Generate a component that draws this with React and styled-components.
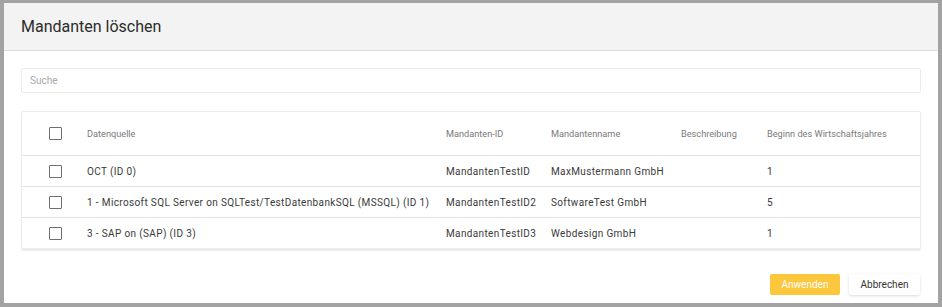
import React from "react";
import styled, { createGlobalStyle } from "styled-components";

const GlobalStyle = createGlobalStyle`
  html, body {
    margin: 0;
    padding: 0;
    background: #a3a3a3;
    font-family: Roboto, "Liberation Sans", sans-serif;
  }
`;

const columns = [
  { key: "source", label: "Datenquelle" },
  { key: "id", label: "Mandanten-ID" },
  { key: "name", label: "Mandantenname" },
  { key: "desc", label: "Beschreibung" },
  { key: "start", label: "Beginn des Wirtschaftsjahres" },
];

const rows = [
  {
    source: "OCT (ID 0)",
    id: "MandantenTestID",
    name: "MaxMustermann GmbH",
    desc: "",
    start: "1",
  },
  {
    source: "1 - Microsoft SQL Server on SQLTest/TestDatenbankSQL (MSSQL) (ID 1)",
    id: "MandantenTestID2",
    name: "SoftwareTest GmbH",
    desc: "",
    start: "5",
  },
  {
    source: "3 - SAP on (SAP) (ID 3)",
    id: "MandantenTestID3",
    name: "Webdesign GmbH",
    desc: "",
    start: "1",
  },
];

const App = () => {
  return (
    <>
      <GlobalStyle />
      <Frame>
        <Dialog>
          <Header>
            <Title>Mandanten löschen</Title>
          </Header>
          <Body>
            <SearchInput placeholder="Suche" />
            <TableCard>
              <Row $head>
                <CheckCell>
                  <Checkbox />
                </CheckCell>
                {columns.map((c) => (
                  <Cell key={c.key} $head>
                    {c.label}
                  </Cell>
                ))}
              </Row>
              {rows.map((r, i) => (
                <Row key={i} $last={i === rows.length - 1}>
                  <CheckCell>
                    <Checkbox />
                  </CheckCell>
                  {columns.map((c) => (
                    <Cell key={c.key}>{r[c.key]}</Cell>
                  ))}
                </Row>
              ))}
            </TableCard>
          </Body>
          <Footer>
            <Button $primary>Anwenden</Button>
            <Button>Abbrechen</Button>
          </Footer>
        </Dialog>
      </Frame>
    </>
  );
};

export default App;

const Frame = styled.div`
  height: 307px;
  box-sizing: border-box;
  padding: 3px 4px 4px 4px;
  background: #a3a3a3;
`;

const Dialog = styled.div`
  height: 100%;
  background: #fff;
  display: flex;
  flex-direction: column;
`;

const Header = styled.div`
  height: 47px;
  background: #f3f3f3;
  border-bottom: 1px solid #dcdcdc;
  display: flex;
  align-items: center;
  padding: 0 17px;
`;

const Title = styled.h2`
  margin: 0;
  font-size: 16px;
  font-weight: 400;
  color: #2b2b2b;
`;

const Body = styled.div`
  padding: 17px 17px 0 17px;
  display: flex;
  flex-direction: column;
  gap: 18px;
`;

const SearchInput = styled.input`
  height: 25px;
  box-sizing: border-box;
  border: 1px solid #ececec;
  border-radius: 2px;
  padding: 0 8px;
  font-family: Roboto, "Liberation Sans", sans-serif;
  font-size: 10px;
  color: #333;
  outline: none;

  &::placeholder {
    color: #a8a8a8;
  }
`;

const TableCard = styled.div`
  border: 1px solid #ececec;
  border-radius: 2px;
  box-shadow: 0 2px 1px rgba(0, 0, 0, 0.08);
`;

const Row = styled.div`
  display: grid;
  grid-template-columns: 65px 359px 105px 130px 86px 1fr;
  align-items: center;
  height: ${(p) => (p.$head ? "43px" : "30px")};
  border-bottom: ${(p) => (p.$last ? "none" : "1px solid #e3e3e3")};
`;

const CheckCell = styled.div`
  padding-left: 27px;
  display: flex;
  align-items: center;
`;

const Checkbox = styled.span`
  display: block;
  width: 11px;
  height: 11px;
  border: 1.5px solid #6f6f6f;
  border-radius: 1px;
`;

const Cell = styled.div`
  font-size: ${(p) => (p.$head ? "9.2px" : "10px")};
  color: ${(p) => (p.$head ? "#7a7a7a" : "#3a3a3a")};
  letter-spacing: ${(p) => (p.$head ? "0" : "0.36px")};
  white-space: nowrap;
`;

const Footer = styled.div`
  margin-top: auto;
  display: flex;
  justify-content: flex-end;
  gap: 9px;
  padding: 0 18px 8px 0;
`;

const Button = styled.button`
  height: 21px;
  min-width: ${(p) => (p.$primary ? "70px" : "71px")};
  padding: 0 10px;
  border: none;
  border-radius: 2px;
  font-family: Roboto, "Liberation Sans", sans-serif;
  font-size: 10px;
  cursor: pointer;
  background: ${(p) => (p.$primary ? "#fcc63d" : "#fff")};
  color: ${(p) => (p.$primary ? "#fff" : "#333")};
  box-shadow: ${(p) =>
    p.$primary ? "none" : "0 1px 3px rgba(0, 0, 0, 0.15)"};
`;
